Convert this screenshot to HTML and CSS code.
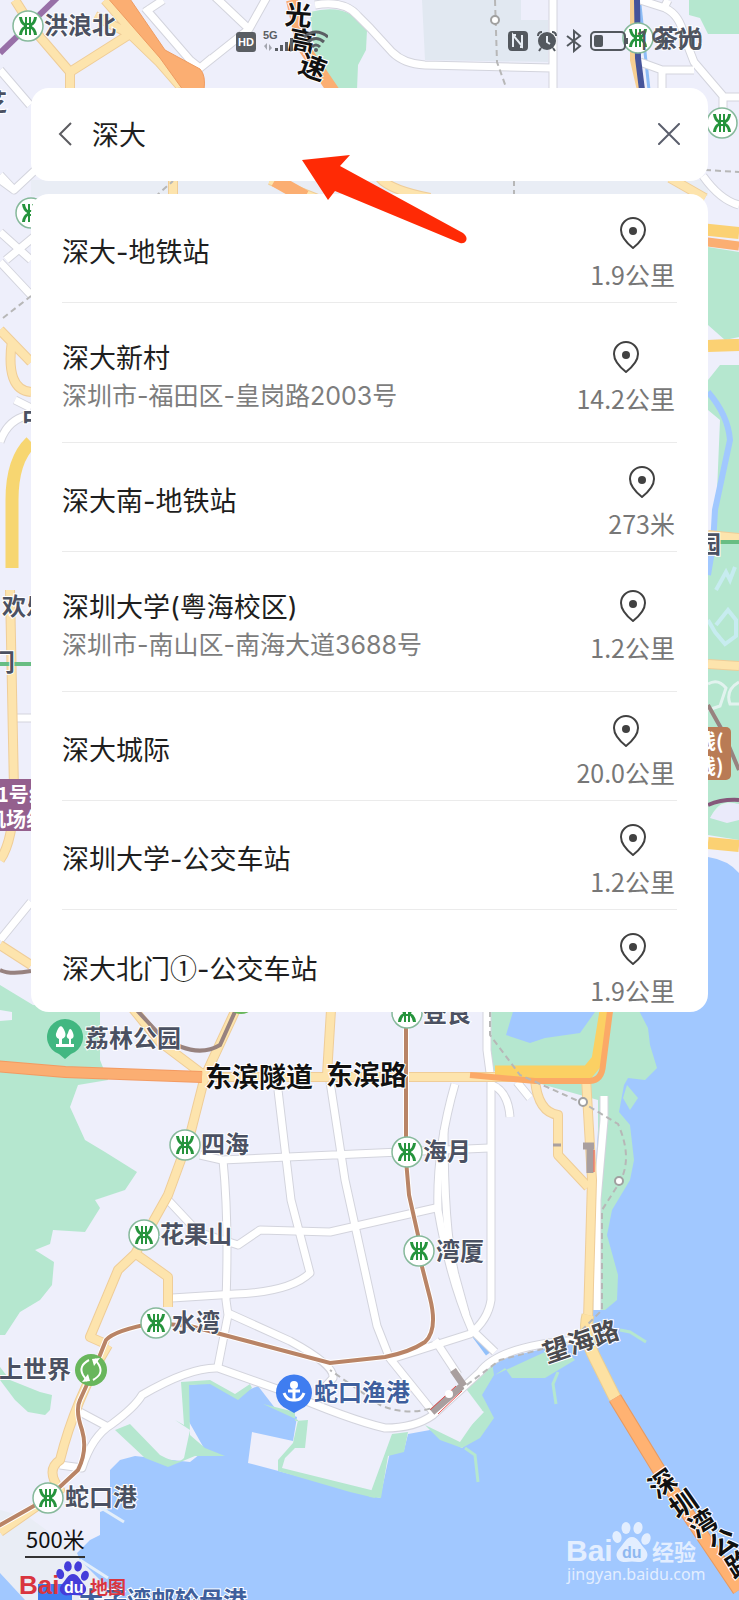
FILE: index.html
```html
<!DOCTYPE html>
<html lang="zh-CN">
<head>
<meta charset="utf-8">
<meta name="viewport" content="width=device-width, initial-scale=1">
<title>深大</title>
<link rel="stylesheet" href="styles.css">
</head>
<body>
<div class="screen">
<svg class="map" viewBox="0 0 739 1600" preserveAspectRatio="xMidYMin slice" aria-label="地图">
  <defs>
    <g id="metro">
      <circle r="15" fill="#fff" stroke="#86b99b" stroke-width="1.5"/>
      <g fill="none" stroke="#26943d">
        <path stroke-width="3" d="M-7.500-9Q-7-3-2.500-1V1Q-7 3-7.500 9M7.500-9Q7-3 2.500-1V1Q7 3 7.500 9"/>
        <path d="M-2-9V9M2-9V9M-5-2H5M-5 2H5" stroke-width="2"/>
      </g>
    </g>
    <g id="paw">
      <ellipse cx="-15" cy="-7" rx="4.500" ry="6" transform="rotate(-15 -15 -7)"/>
      <ellipse cx="-6" cy="-16" rx="4.500" ry="6"/>
      <ellipse cx="6" cy="-16" rx="4.500" ry="6" transform="rotate(10 6 -16)"/>
      <ellipse cx="14" cy="-5" rx="4.500" ry="6" transform="rotate(20 14 -5)"/>
      <path d="M0-7C6-7 8 0 13 5C19 12 13 19 6 18Q0 17-6 18C-13 19-19 12-13 5C-8 0-6-7 0-7Z"/>
    </g>
    <g id="minor" fill="none">
      <path d="M0 70L30 105M0 175L14 190L62 145M14 190L-6 175M0 232L31 260M6 260L35 236M0 262L31 295"/>
      <path d="M145 12L163 0M145 8L190 60L200 68L249 29L210-8M249 29L268-5M200 68L212 58"/>
      <path d="M315 5Q345 0 358 16L370 28L392 52Q404 64 425 65L552 68M553 0V90"/>
      <path d="M640 0L665 8Q680 15 684 36L694 62L723 96V112M640 62L662 70H694M662 70V90M723 97H739M668 0L664 8M703 176Q720 200 739 205"/>
      <path d="M0 442Q8 418 31 415M15 400L31 408M17 718H31M0 940L31 902"/>
      <path d="M278 1090L291 1200L310 1273Q290 1292 235 1294L172 1298"/>
      <path d="M329 1075L345 1180L377 1326L388 1354M200 1155L222 1160L400 1152L489 1148"/>
      <path d="M223 1160Q229 1220 226 1300L228 1315L218 1366"/>
      <path d="M168 1200L198 1232L238 1245L260 1230L330 1232L440 1207"/>
      <path d="M487 1011V1050L491 1080V1300Q488 1320 470 1334L388 1360"/>
      <path d="M455 1084Q436 1150 438 1210Q450 1280 472 1330L495 1352"/>
      <path d="M444 1130Q444 1230 455 1275L466 1315"/>
      <path d="M490 1084Q508 1090 510 1117M517 1082L530 1098M604 1096V1120L597 1200V1310"/>
      <path d="M228 1313L290 1341Q335 1365 333 1378L324 1388"/>
      <path d="M80 1412L110 1428M60 1465L82 1468Q92 1436 112 1424Q135 1407 142 1395Q190 1367 218 1368L280 1390Q350 1420 385 1428Q415 1428 433 1415L480 1372Q500 1345 580 1340"/>
      <path d="M388 1356L433 1412M435 1340L458 1375"/>
    </g>
    <g id="main" fill="none">
      <path d="M95 16L130 34L70 72V90M70 72L34 30L15 0M130 34L188 90M105 0L180 86"/>
      <path d="M173 178V198M270 180L320 200M380 178Q390 190 430 198M670 178L705 198"/>
      <path d="M0 330L31 362M12 340Q5 390 31 392"/>
      <path d="M10 590L14 790Q14 840 0 860M0 945L31 965"/>
      <path d="M130 1005L160 1042L205 1076L238 1005M205 1076L190 1135L168 1195L135 1254L118 1270L90 1337L108 1345"/>
      <path d="M136 1254L168 1277V1307M108 1345Q75 1400 60 1460Q45 1470 60 1490L0 1532"/>
      <path d="M331 1010L327 1075M205 1077H560"/>
      <path d="M535 1080Q538 1112 558 1115V1155L588 1187M586 1078L592 1180L588 1320"/>
      <path d="M708 345L739 344M708 535L739 538M708 664L739 666"/>
    </g>
  </defs>

  <rect width="739" height="1600" fill="#eeeffb"/>
  <path fill="#e1e8f1" d="M422 0H521V20H548V62L425 60Z"/>
  <path fill="#e9edf5" d="M31 180H708V196H31ZM0 1510L30 1518L78 1553L120 1600H0Z"/>
  <path fill="#a1c8ff" d="M708 857Q728 860 739 873V1600H120L80 1560L77 1553L90 1540L100 1535V1512L110 1508V1470L120 1460L135 1456L190 1462L205 1450L188 1420L187 1385L210 1383L235 1396L258 1386L275 1408L297 1417L293 1441L252 1432L248 1463L380 1498L390 1452L404 1450L408 1434L430 1430L462 1448L492 1420L480 1395L495 1360L560 1345L585 1330L600 1100L500 1040L505 1005H635V857ZM0 1573L25 1600H0Z"/>
  <g fill="#b5e7cf">
    <path d="M310 12Q350 2 367 30L366 50L358 65L357 90H338L315 60Z"/>
    <path d="M689 0H739V34H708L700 18L689 15Z"/>
    <path d="M0 985L33 1005L100 1011V1060L108 1080L78 1085L70 1107L85 1140L105 1152L137 1172L125 1190L95 1200L100 1208L85 1232L53 1230L50 1244L35 1250L54 1262L52 1285L40 1300L20 1312L5 1335H0Z"/>
    <path d="M0 1367L10 1380L40 1392L52 1395L50 1410L45 1415L28 1412L15 1400L0 1380Z"/>
    <path d="M491 1005H515L506 1035L530 1043L545 1038L580 1033L600 1005H636L648 1028L650 1045L657 1068L645 1080L628 1078L624 1085L619 1112L630 1125L634 1160L630 1180L612 1210L607 1235L618 1275L617 1300L605 1310H598V1100L491 1070Z"/>
    <path d="M627 1085L638 1098L630 1110L623 1098ZM495 1375L560 1345L575 1360L545 1378H512L505 1368Z"/>
    <path d="M115 1430L130 1424L160 1455Q178 1465 184 1458L190 1430L175 1420L184 1425L181 1382L210 1380L235 1394L250 1384L252 1388L238 1400L210 1384L189 1385L190 1435L205 1448L225 1456H195L168 1467L145 1458Z"/>
    <path d="M263 1404L295 1412V1421L308 1420L305 1448H295L285 1458L282 1468L375 1491V1498L350 1492L278 1471V1460L293 1443L298 1420Z"/>
    <path d="M392 1434L408 1432L404 1452L388 1456L381 1498L369 1497ZM425 1425L460 1442L482 1410L464 1386L492 1362L494 1375L482 1395L494 1418L480 1438L462 1448L440 1440Z"/>
    <path d="M708 247L739 252V337L725 340L708 325ZM708 380L720 365H739V840L708 835Z"/>
  </g>
  <path fill="#eeeffb" d="M0 1010L12 1012V1020L0 1021ZM708 410L720 420L715 540H708ZM460 1394L484 1412L461 1436L438 1417Z"/>
  <path fill="#eeeffb" d="M540 1090L584 1110L588 1170L562 1150V1112L544 1108Z"/>
  <path fill="none" stroke="#a1c8ff" stroke-width="6" d="M708 392Q728 415 730 440L715 510L713 545L708 575"/>
  <path fill="none" stroke="#c7ecf0" stroke-width="4" d="M716 590L726 572L730 580L735 567M708 620L715 632L725 644L736 636V620L728 610L716 625"/>
  <path fill="none" stroke="#e2f3ef" stroke-width="3" d="M708 684Q718 678 726 688L720 706L708 710M739 682Q725 690 730 704H739M712 818Q720 800 735 805"/>
  <path fill="#eaeafa" d="M710 818Q720 800 739 804V820L727 823Z"/>
  <g fill="none" stroke="#b5e7cf" stroke-width="3"><path d="M465 1448L475 1455L478 1482M558 1372L553 1384L556 1404M620 1330L630 1332L646 1342"/><path d="M98 1506L124 1522M80 1560L108 1578" stroke="#e4effa"/></g>
  <path d="M640 5L649 90" stroke="#8dbdf6" stroke-width="3"/>
  <path d="M474 1335L488 1354" stroke="#92c0fa" stroke-width="5"/>

  <use href="#minor" class="road road--casing"/>
  <use href="#minor" class="road road--minor"/>
  <use href="#main" class="road road--edge"/>
  <use href="#main" class="road road--main"/>

  <g fill="none">
    <path d="M106 -4H128L165 50L200 69Q206 75 204 90H183L160 58Z" fill="#fbae72" stroke="#ee9c62"/>
    <path d="M292 0L302 45L334 92" stroke="#fbae72" stroke-width="12"/>
    <path d="M275 180L305 197" stroke="#fbae72" stroke-width="14"/>
    <path d="M31 442Q12 460 12 500V568" stroke="#f7d671" stroke-width="13"/>
    <path d="M700 229L739 233M708 843L739 846M708 346L739 345" stroke="#fbd173" stroke-width="12"/>
    <path d="M700 241L739 246" stroke="#fbae72" stroke-width="9"/>
    <path d="M-5 1066L65 1072L202 1077" stroke="#f39a61" stroke-width="12"/>
    <path d="M-5 1066L65 1072L202 1077" stroke="#fbae72" stroke-width="10"/>
    <path d="M495 1072H588L598 1060L606 1011" stroke="#fbd063" stroke-width="13"/>
    <path d="M470 1075L535 1081H590Q602 1080 603 1065L610 1011" stroke="#fba967" stroke-width="6"/>
    <path d="M588 1315Q583 1335 595 1358L615 1398" stroke="#e9cf96" stroke-width="13"/>
    <path d="M588 1315Q583 1335 595 1358L615 1398" stroke="#fde1a2" stroke-width="11"/>
    <path d="M615 1398L665 1480L739 1590" stroke="#e79b63" stroke-width="14"/>
    <path d="M615 1398L665 1480L739 1590" stroke="#ffb272" stroke-width="12"/>
    <path d="M60 -5L0 53" stroke="#9870a8" stroke-width="6"/>
    <path d="M634 0V60L641 90" stroke="#f7cf92" stroke-width="8"/>
    <path d="M637 0L638 58L642 90" stroke="#46549a" stroke-width="6"/>
    <path d="M0 664H31M719 542H739" stroke="#68bd83" stroke-width="4"/>
    <path d="M132 1005L160 1035Q195 1060 220 1045L238 1005M0 970Q10 975 31 971M708 705L722 730L739 770" stroke="#97827f" stroke-width="4"/>
    <path d="M708 805Q722 799 739 800" stroke="#85577a" stroke-width="4"/>
    <g stroke="#fff" stroke-width="6"><path id="rail" d="M406 1028V1160L409 1195L418 1235L419 1255L430 1298Q438 1330 425 1342Q410 1352 385 1357L330 1363L190 1326L155 1323Q115 1330 106 1340L98 1360L80 1400Q75 1410 82 1430Q88 1450 78 1470L48 1498L-5 1528"/></g>
    <path d="M406 1028V1160L409 1195L418 1235L419 1255L430 1298Q438 1330 425 1342Q410 1352 385 1357L330 1363L190 1326L155 1323Q115 1330 106 1340L98 1360L80 1400Q75 1410 82 1430Q88 1450 78 1470L48 1498L-5 1528" stroke="#b98466" stroke-width="4"/>
    <path class="dashes" d="M495 0L497 62L507 90M514 180V195M155 197L173 181M3 318L31 296M490 1011V1035L520 1075L585 1104L618 1124Q634 1160 618 1185L602 1210V1310L570 1342L500 1360L440 1405Q410 1418 380 1405L330 1370M705 170L739 172"/>
    <g fill="#fff" stroke="#a0a0a0" stroke-width="2"><circle cx="495" cy="20" r="4"/><circle cx="583" cy="1102" r="4"/><circle cx="619" cy="1181" r="4"/></g>
    <path d="M590 1144V1173M583 1146H594M432 1412L462 1386M453 1370L464 1386" stroke="#a99f9f" stroke-width="7"/>
    <path d="M553 1145H561" stroke="#a99f9f" stroke-width="3"/>
    <path d="M430 1410L456 1386M438 1414L462 1391M594 1150V1172" stroke="#e54b4b" stroke-width="1"/>
    <circle cx="449" cy="1394" r="4" fill="#fff"/>
  </g>

  <path fill="#94608e" d="M0 779H40V831H0Z"/>
  <rect x="690" y="727" width="41" height="53" rx="5" fill="#b97b55"/>
  <g class="tag"><text x="-3" y="802">1号线</text><text x="-14" y="827">机场线</text><text x="696" y="749">线(</text><text x="696" y="774">线)</text></g>

  <use href="#metro" x="28" y="26"/><use href="#metro" x="638" y="38"/><use href="#metro" x="722" y="123"/><use href="#metro" x="31" y="213"/>
  <use href="#metro" x="185" y="1145"/><use href="#metro" x="144" y="1235"/><use href="#metro" x="407" y="1013"/><use href="#metro" x="407" y="1152"/><use href="#metro" x="419" y="1251"/><use href="#metro" x="156" y="1323"/><use href="#metro" x="48" y="1498"/>
  <circle cx="241" cy="998" r="16" fill="#68b65c"/>
  <circle cx="91" cy="1370" r="16" fill="#68b65c"/>
  <path d="M89 1360Q78 1366 83 1375L87 1381M93 1380Q104 1374 99 1365L95 1359" fill="none" stroke="#fff" stroke-width="2"/>
  <path fill="#fff" d="M82 1382L90 1381L88 1374ZM100 1358L92 1359L94 1366Z"/>
  <path fill="#42b781" d="M65 1059L59 1054A18 18 0 1 1 71 1054Z"/>
  <path fill="#fff" d="M56 1044H74V1047H56ZM59 1045V1039Q54 1037 57 1031Q61 1021 65 1032Q67 1037 62 1039V1045ZM69 1045V1039Q65 1037 68 1033Q70 1025 73 1033Q75 1038 71 1039V1045Z"/>
  <path fill="#3f7df0" d="M294 1413L287 1409A18 18 0 1 1 301 1409Z"/>
  <path d="M294 1389V1400M288 1391H300M284 1393Q287 1401 294 1400Q301 1401 304 1393" fill="none" stroke="#fff" stroke-width="3"/><circle cx="294" cy="1385" r="4" fill="#fff"/>
  <path fill="#3f7df0" d="M38 1600V1584H72V1600Z"/>

  <g class="place-name">
    <text x="44" y="34">洪浪北</text><text x="654" y="47">茶光</text><text x="-17" y="111">芝</text><text x="22" y="427">中</text><text x="697" y="553">园</text>
    <text x="2" y="615">欢乐</text><text x="-9" y="671">门</text><text x="85" y="1047">荔林公园</text><text x="423" y="1022">登良</text>
    <text x="201" y="1153">四海</text><text x="423" y="1160">海月</text><text x="160" y="1243">花果山</text><text x="436" y="1260">湾厦</text><text x="172" y="1331">水湾</text>
    <text x="-1" y="1378">上世界</text><text x="65" y="1506">蛇口港</text>
  </g>
  <g class="place-name place-name--port"><text x="314" y="1401">蛇口渔港</text><text x="79" y="1609">太子湾邮轮母港</text></g>
  <g class="road-name">
    <text x="205" y="1087">东滨隧道</text><text x="326" y="1085">东滨路</text>
    <text x="285" y="25" transform="rotate(4 298 15)">光</text><text x="288" y="51" transform="rotate(12 301 42)">高</text><text x="299" y="77" transform="rotate(20 312 68)">速</text>
    <text x="650" y="1494" transform="rotate(-35 662 1485)">深</text><text x="670" y="1515" transform="rotate(-35 682 1505)">圳</text><text x="690" y="1534" transform="rotate(-32 702 1525)">湾</text><text x="710" y="1553" transform="rotate(-32 722 1543)">公</text><text x="727" y="1574" transform="rotate(-32 739 1565)">路</text>
  </g>
  <text class="road-name road-name--soft" x="547" y="1363" transform="rotate(-19 547 1363)">望海路</text>

  <text class="scale" x="26" y="1548">500米</text><path d="M25 1557H85" fill="none" stroke="#333" stroke-width="2"/>
  <g fill="#d9353f"><text class="logo" x="19" y="1594">Bai</text><text class="logo logo--small" x="90" y="1594">地图</text></g>
  <use href="#paw" transform="translate(73 1580) scale(0.85)" fill="#443dda"/><text class="logo logo--du" x="64" y="1593" fill="#fff">du</text>
  <g fill="#fff" opacity="0.7"><text class="logo logo--mark" x="566" y="1561">Bai</text><text class="logo logo--exp" x="652" y="1560">经验</text><use href="#paw" x="632" y="1544"/><text class="logo-url" x="567" y="1580">jingyan.baidu.com</text></g>
  <text class="logo logo--du" x="622" y="1558" fill="#8eb8f0">du</text>
</svg>

<header class="status">
  <svg width="92" height="26" viewBox="0 0 92 26" fill="#5a5e63" aria-hidden="true">
    <rect y="4" width="20" height="20" rx="3"/>
    <text x="2" y="18" class="status-hd">HD</text><text x="27" y="11" class="status-5g">5G</text>
    <path d="M28 18L31 15V22ZM33 16V23L36 20Z" opacity="0.5"/>
    <path d="M39 20H42V23H39ZM44 17H47V23H44ZM49 14H52V23H49ZM54 10H57V23H54Z"/>
    <path d="M68 9Q80-1 92 9M72 14Q80 7 88 14M76 19Q80 15 84 19" fill="none" stroke="#5a5e63" stroke-width="3"/><circle cx="80" cy="22" r="2"/>
  </svg>
  <div class="status-right">
    <svg width="20" height="20" viewBox="0 0 20 20" aria-hidden="true"><rect width="20" height="20" rx="4" fill="#53585e"/><path d="M5 16V4L14 15V4M5 4H8M15 16H12" fill="none" stroke="#e7edf4" stroke-width="2"/></svg>
    <svg width="22" height="22" viewBox="0 0 22 22" fill="#53585e" aria-hidden="true"><circle cx="11" cy="11" r="9"/><path d="M2 6Q2 2 6 2M20 6Q20 2 16 2M5 18L3 21M17 18L19 21" fill="none" stroke="#53585e" stroke-width="2"/><path d="M11 6V12L14 14" fill="none" stroke="#e7edf4" stroke-width="2"/></svg>
    <svg width="16" height="24" viewBox="0 0 16 24" fill="none" stroke="#53585e" stroke-width="2" aria-hidden="true"><path d="M1 7L14 17L8 22V2L14 7L1 17"/></svg>
    <svg width="38" height="22" viewBox="0 0 38 22" aria-hidden="true"><rect x="1" y="2" width="34" height="18" rx="4" fill="none" stroke="#53585e" stroke-width="2"/><rect x="4" y="5" width="9" height="12" rx="2" fill="#53585e"/><path d="M37 8V14" stroke="#53585e" stroke-width="2"/></svg>
    <span class="clock">19:10</span>
  </div>
</header>

<main class="panels">
  <form class="search">
    <button class="icon-button" type="button" aria-label="返回"><svg width="14" height="26" viewBox="0 0 14 26" fill="none" stroke="#5c5c60" stroke-width="2"><path d="M13 2L2 13L13 24"/></svg></button>
    <input class="search-input" type="text" value="深大" aria-label="搜索地点">
    <button class="icon-button" type="button" aria-label="清除"><svg width="22" height="22" viewBox="0 0 22 22" fill="none" stroke="#5b5f6d" stroke-width="2" stroke-linecap="round"><path d="M1 1L21 21M21 1L1 21"/></svg></button>
  </form>
  <ul class="results">
    <li class="place"><div class="info"><div class="title">深大-地铁站</div></div><div class="distance"><svg class="pin" viewBox="0 0 26 32"><path d="M13 31C8 27 1 20 1 13A12 12 0 0 1 25 13C25 20 18 27 13 31Z"/><circle cx="13" cy="14" r="4"/></svg>1.9公里</div></li>
    <li class="place place--detailed"><div class="info"><div class="title">深大新村</div><div class="address">深圳市-福田区-皇岗路2003号</div></div><div class="distance"><svg class="pin" viewBox="0 0 26 32"><path d="M13 31C8 27 1 20 1 13A12 12 0 0 1 25 13C25 20 18 27 13 31Z"/><circle cx="13" cy="14" r="4"/></svg>14.2公里</div></li>
    <li class="place"><div class="info"><div class="title">深大南-地铁站</div></div><div class="distance"><svg class="pin" viewBox="0 0 26 32"><path d="M13 31C8 27 1 20 1 13A12 12 0 0 1 25 13C25 20 18 27 13 31Z"/><circle cx="13" cy="14" r="4"/></svg>273米</div></li>
    <li class="place place--detailed"><div class="info"><div class="title">深圳大学(粤海校区)</div><div class="address">深圳市-南山区-南海大道3688号</div></div><div class="distance"><svg class="pin" viewBox="0 0 26 32"><path d="M13 31C8 27 1 20 1 13A12 12 0 0 1 25 13C25 20 18 27 13 31Z"/><circle cx="13" cy="14" r="4"/></svg>1.2公里</div></li>
    <li class="place"><div class="info"><div class="title">深大城际</div></div><div class="distance"><svg class="pin" viewBox="0 0 26 32"><path d="M13 31C8 27 1 20 1 13A12 12 0 0 1 25 13C25 20 18 27 13 31Z"/><circle cx="13" cy="14" r="4"/></svg>20.0公里</div></li>
    <li class="place"><div class="info"><div class="title">深圳大学-公交车站</div></div><div class="distance"><svg class="pin" viewBox="0 0 26 32"><path d="M13 31C8 27 1 20 1 13A12 12 0 0 1 25 13C25 20 18 27 13 31Z"/><circle cx="13" cy="14" r="4"/></svg>1.2公里</div></li>
    <li class="place"><div class="info"><div class="title">深大北门<span class="ordinal">①</span>-公交车站</div></div><div class="distance"><svg class="pin" viewBox="0 0 26 32"><path d="M13 31C8 27 1 20 1 13A12 12 0 0 1 25 13C25 20 18 27 13 31Z"/><circle cx="13" cy="14" r="4"/></svg>1.9公里</div></li>
  </ul>
  <svg class="arrow" width="168" height="92" viewBox="0 0 168 92" aria-hidden="true"><path fill="#ff2a05" d="M2 7L50 2L40 13L163 80Q168 84 166 88Q164 91 160 90L35 38L28 47Z"/></svg>
</main>
</div>
</body>
</html>
```
FILE: styles.css
```css
* { box-sizing: border-box; }
body { margin: 0; font-family: "Noto Sans CJK SC", sans-serif; }
.screen { position: relative; min-height: 100vh; overflow: hidden; }
.map { position: absolute; inset: 0; width: 100%; height: 100%; }

.road { stroke-linejoin: round; }
.road--casing { stroke: #d3d4dd; stroke-width: 9px; }
.road--minor { stroke: #ffffff; stroke-width: 7px; }
.road--edge { stroke: #efcd98; stroke-width: 10px; }
.road--main { stroke: #fde4ad; stroke-width: 8px; }
.dashes { stroke: #b7b7b7; stroke-width: 2px; stroke-dasharray: 6 4; }

.place-name { font-size: 24px; font-weight: 700; fill: #4b5162; stroke: #ffffff; stroke-width: 2px; paint-order: stroke; }
.place-name--port { fill: #3f5f9d; }
.road-name { font-size: 27px; font-weight: 700; fill: #111111; stroke: #ffffff; stroke-width: 2px; paint-order: stroke; }
.road-name--soft { font-size: 26px; fill: #4c4c50; }
.tag { font-size: 20px; font-weight: 700; fill: #ffffff; }
.scale { font-size: 22px; fill: #111111; }
.logo { font-family: "Liberation Sans", "Noto Sans CJK SC", sans-serif; font-size: 26px; font-weight: 700; }
.logo--small { font-size: 18px; }
.logo--du { font-size: 16px; }
.logo--mark { font-size: 30px; }
.logo--exp { font-size: 22px; }
.logo-url { font-family: "Noto Sans", sans-serif; font-size: 16px; }

.status { position: relative; display: flex; justify-content: space-between; align-items: flex-start; height: 88px; padding: 28px 36px 0 236px; }
.status-hd { font: 700 11px "Liberation Sans", sans-serif; fill: #ffffff; }
.status-5g { font: 700 11px "Liberation Sans", sans-serif; }
.status-right { display: flex; align-items: center; gap: 8px; height: 26px; }
.clock { font-family: Roboto, sans-serif; font-size: 27px; line-height: 26px; color: #53585e; }

.panels { position: relative; display: flex; flex-direction: column; gap: 13px; padding: 0 31px; }
.search { display: flex; align-items: center; gap: 20px; height: 93px; padding: 0 28px 2px 27px; background: #ffffff; border-radius: 18px; }
.icon-button { display: flex; padding: 0; border: 0; background: none; }
.search-input { flex: 1; min-width: 0; height: 44px; padding: 0; border: 0; outline: 0; background: none; color: #1e1e20; font-family: Inter, "Noto Sans CJK SC", sans-serif; font-size: 27px; }

.results { margin: 0; padding: 0 31px; overflow: hidden; list-style: none; background: #ffffff; border-radius: 18px; }
.place { display: flex; justify-content: space-between; align-items: center; padding: 23px 2px 13px 0; border-bottom: 1px solid #ebebeb; }
.place--detailed { padding: 38px 2px 29px 0; }
.place:last-child { padding-bottom: 7px; border-bottom: 0; }
.info { font-family: Inter, "Noto Sans CJK SC", sans-serif; }
.title { color: #1e1e20; font-size: 27px; line-height: 36px; }
.ordinal { font-family: "Noto Sans CJK SC", sans-serif; }
.address { margin-top: 2px; color: #7d7d7d; font-size: 25px; line-height: 34px; }
.distance { display: flex; flex-direction: column; align-items: center; gap: 10px; color: #777777; font-size: 25px; line-height: 30px; }
.pin { width: 26px; height: 32px; fill: none; stroke: #414141; stroke-width: 2px; }
.pin circle { fill: #414141; stroke: none; }
.arrow { position: absolute; left: 300px; top: 65px; }
```
